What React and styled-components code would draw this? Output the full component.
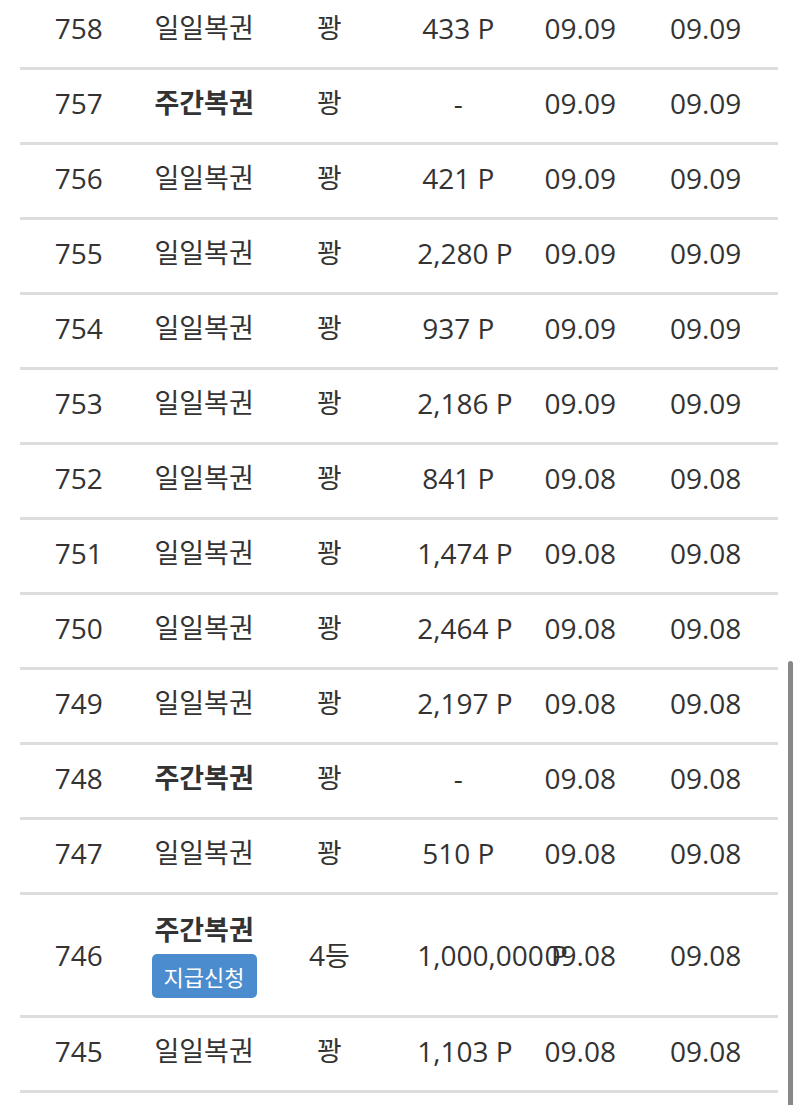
import React from "react";
import styled, { createGlobalStyle } from "styled-components";

const GlobalStyle = createGlobalStyle`
  html, body {
    margin: 0;
    padding: 0;
    background: #fff;
    overflow: hidden;
  }
  body {
    font-family: "Open Sans", "Noto Sans CJK KR", sans-serif;
    color: #333;
  }
`;

const Page = styled.div`
  position: relative;
  width: 800px;
  height: 1105px;
  overflow: hidden;
`;

const List = styled.div`
  width: 762px;
  margin: -5px 0 0 16px;
`;

// 구분선은 글자 칸보다 4px 안쪽에서 시작
const Row = styled.div`
  display: grid;
  grid-template-columns: repeat(6, 125.4px);
  align-items: center;
  padding: ${(p) => (p.$tall ? "17px 0 20px" : "15px 0 24px")};
  background-image: linear-gradient(#dddddd, #dddddd);
  background-size: 758px 3px;
  background-position: 4px 100%;
  background-repeat: no-repeat;
`;

const Cell = styled.div`
  display: flex;
  flex-direction: column;
  align-items: center;
  justify-content: center;
  font-size: ${(p) => (p.$hangul ? "27px" : "28px")};
  line-height: 36px;
  white-space: nowrap;
`;

// 금액 칸: 넘치는 숫자는 오른쪽으로 삐져나감
const Prize = styled.div`
  padding: 0 18px 0 25px;
  font-size: 28px;
  line-height: 36px;
  text-align: center;
  white-space: nowrap;
`;

const Name = styled.span`
  font-weight: ${(p) => (p.$bold ? 700 : 400)};
  font-size: 27px;
`;

const ClaimButton = styled.button`
  margin: 6px 0 0;
  width: 105px;
  height: 44px;
  border: none;
  border-radius: 5px;
  background: #4a8ccd;
  color: #fff;
  font-family: "Noto Sans CJK KR", sans-serif;
  font-size: 22px;
  padding: 0;
`;

const Unit = styled.span`
  font-size: 27px;
`;

const ScrollThumb = styled.div`
  position: absolute;
  right: 7px;
  top: 661px;
  bottom: -4px;
  width: 5px;
  border-radius: 3px;
  background: #888;
`;

const rows = [
  { no: 758, weekly: false, prize: "433 P", d1: "09.09", d2: "09.09" },
  { no: 757, weekly: true, prize: "-", d1: "09.09", d2: "09.09" },
  { no: 756, weekly: false, prize: "421 P", d1: "09.09", d2: "09.09" },
  { no: 755, weekly: false, prize: "2,280 P", d1: "09.09", d2: "09.09" },
  { no: 754, weekly: false, prize: "937 P", d1: "09.09", d2: "09.09" },
  { no: 753, weekly: false, prize: "2,186 P", d1: "09.09", d2: "09.09" },
  { no: 752, weekly: false, prize: "841 P", d1: "09.08", d2: "09.08" },
  { no: 751, weekly: false, prize: "1,474 P", d1: "09.08", d2: "09.08" },
  { no: 750, weekly: false, prize: "2,464 P", d1: "09.08", d2: "09.08" },
  { no: 749, weekly: false, prize: "2,197 P", d1: "09.08", d2: "09.08" },
  { no: 748, weekly: true, prize: "-", d1: "09.08", d2: "09.08" },
  { no: 747, weekly: false, prize: "510 P", d1: "09.08", d2: "09.08" },
  { no: 746, weekly: true, win: "4", claim: true, prize: "1,000,000 P", d1: "09.08", d2: "09.08" },
  { no: 745, weekly: false, prize: "1,103 P", d1: "09.08", d2: "09.08" },
];

export default function App() {
  return (
    <Page>
      <GlobalStyle />
      <List>
        {rows.map((r) => (
          <Row key={r.no} $tall={r.claim}>
            <Cell>{r.no}</Cell>
            <Cell>
              <Name $bold={r.weekly}>{r.weekly ? "주간복권" : "일일복권"}</Name>
              {r.claim && <ClaimButton>지급신청</ClaimButton>}
            </Cell>
            <Cell $hangul={!r.win}>
              {r.win ? (
                <span>
                  {r.win}
                  <Unit>등</Unit>
                </span>
              ) : (
                "꽝"
              )}
            </Cell>
            <Prize>{r.prize}</Prize>
            <Cell>{r.d1}</Cell>
            <Cell>{r.d2}</Cell>
          </Row>
        ))}
      </List>
      <ScrollThumb />
    </Page>
  );
}
